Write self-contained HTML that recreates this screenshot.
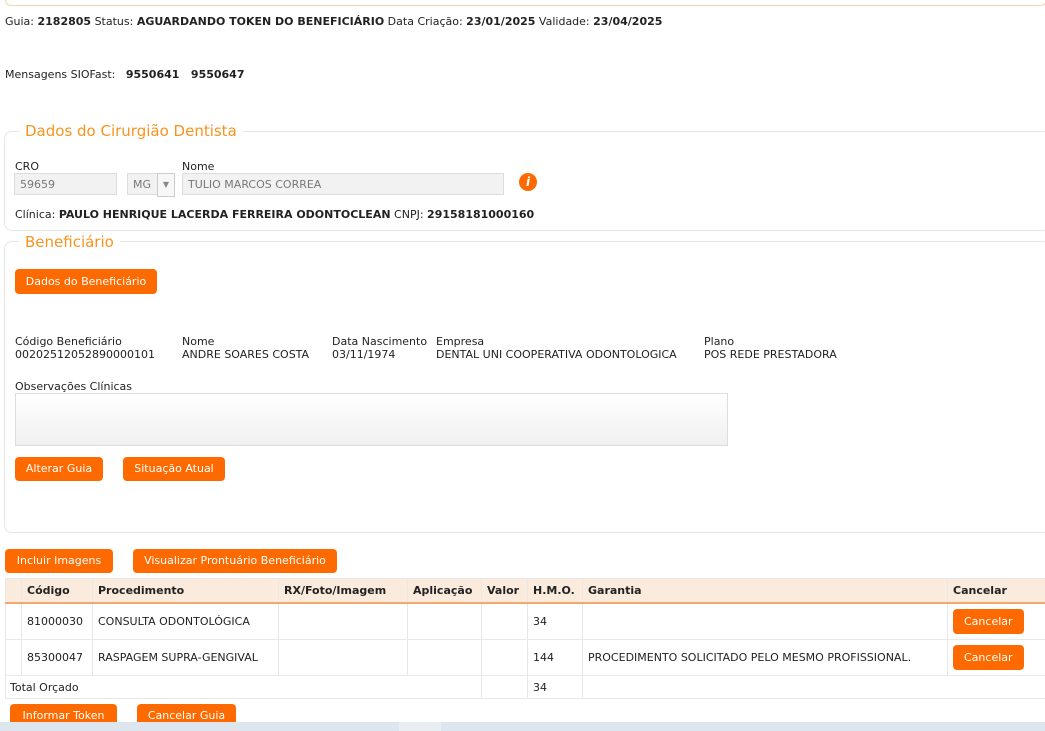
<!DOCTYPE html>
<html><head><meta charset="utf-8"><style>
body{margin:0;width:1045px;height:731px;overflow:hidden;background:#fff;font-family:"DejaVu Sans",Tahoma,sans-serif;font-size:11px;color:#222;position:relative}
.a{position:absolute;white-space:nowrap}
b{font-weight:bold}
.fs{position:absolute;border:1px solid #e6e6e6;border-radius:8px;border-right:none}
.lg{position:absolute;background:#fff;color:#f7941d;font-size:15px;padding:0 6px;font-family:"DejaVu Sans",sans-serif}
.in{position:absolute;background:#f2f2f2;border:1px solid #ddd;color:#777;height:22px;line-height:22px;padding-left:5px;box-sizing:border-box}
.btn{position:absolute;background:#ff6a00;color:#fff;border-radius:4px;height:24px;line-height:24px;text-align:center;font-size:11px}
table{position:absolute;left:5px;top:578px;border-collapse:collapse;width:1045px}
td,th{border:1px solid #e8e8e8;padding:0 5px;text-align:left;font-size:11px;white-space:nowrap}
tr.r td{height:35px}
th{background:#fbebdc;height:23px;border-bottom:2px solid #f5a66b}
.cb{display:inline-block;background:#ff6a00;color:#fff;border-radius:4px;padding:0 11px;height:25px;line-height:25px}
</style></head><body>
<div class="a" style="left:5px;top:-6px;width:1040px;height:10px;border:1px solid #f3d6b4;border-radius:6px"></div>
<div class="a" style="left:5px;top:15px">Guia: <b>2182805</b> Status: <b>AGUARDANDO TOKEN DO BENEFICIÁRIO</b> Data Criação: <b>23/01/2025</b> Validade: <b>23/04/2025</b></div>
<div class="a" style="left:5px;top:68px">Mensagens SIOFast: &nbsp; <b>9550641 &nbsp; 9550647</b></div>

<div class="fs" style="left:4px;top:131px;width:1045px;height:98px"></div>
<div class="lg" style="left:19px;top:122px">Dados do Cirurgião Dentista</div>
<div class="a" style="left:15px;top:160px">CRO</div>
<div class="a" style="left:182px;top:160px">Nome</div>
<div class="in" style="left:14px;top:173px;width:103px">59659</div>
<div class="in" style="left:127px;top:173px;width:31px">MG</div>
<div class="a" style="left:157px;top:173px;width:18px;height:24px;border:1px solid #ccc;box-sizing:border-box;background:#f7f7f7;color:#888;text-align:center;line-height:22px;font-size:8px">▼</div>
<div class="in" style="left:182px;top:173px;width:322px">TULIO MARCOS CORREA</div>
<div class="a" style="left:519px;top:173px;width:18px;height:18px;border-radius:50%;background:#ff6a00;color:#fff;font-weight:bold;font-style:italic;text-align:center;line-height:18px;font-size:12px">i</div>
<div class="a" style="left:15px;top:208px">Clínica: <b>PAULO HENRIQUE LACERDA FERREIRA ODONTOCLEAN</b> CNPJ: <b>29158181000160</b></div>

<div class="fs" style="left:4px;top:241px;width:1045px;height:290px"></div>
<div class="lg" style="left:19px;top:233px">Beneficiário</div>
<div class="btn" style="left:15px;top:269px;width:142px;height:25px;line-height:25px">Dados do Beneficiário</div>
<div class="a" style="left:15px;top:335px;line-height:13px">Código Beneficiário<br>00202512052890000101</div>
<div class="a" style="left:182px;top:335px;line-height:13px">Nome<br>ANDRE SOARES COSTA</div>
<div class="a" style="left:332px;top:335px;line-height:13px">Data Nascimento<br>03/11/1974</div>
<div class="a" style="left:436px;top:335px;line-height:13px">Empresa<br>DENTAL UNI COOPERATIVA ODONTOLOGICA</div>
<div class="a" style="left:704px;top:335px;line-height:13px">Plano<br>POS REDE PRESTADORA</div>
<div class="a" style="left:15px;top:380px">Observações Clínicas</div>
<div class="a" style="left:15px;top:393px;width:711px;height:51px;border:1px solid #ddd;background:linear-gradient(#fff,#f0f0f0)"></div>
<div class="btn" style="left:15px;top:457px;width:88px">Alterar Guia</div>
<div class="btn" style="left:123px;top:457px;width:102px">Situação Atual</div>

<div class="btn" style="left:5px;top:549px;width:108px">Incluir Imagens</div>
<div class="btn" style="left:133px;top:549px;width:204px">Visualizar Prontuário Beneficiário</div>

<table>
<tr><th style="width:5px"></th><th style="width:60px">Código</th><th style="width:175px">Procedimento</th><th style="width:118px">RX/Foto/Imagem</th><th style="width:63px">Aplicação</th><th style="width:35px">Valor</th><th style="width:44px">H.M.O.</th><th style="width:354px">Garantia</th><th>Cancelar</th></tr>
<tr class="r"><td></td><td>81000030</td><td>CONSULTA ODONTOLÓGICA</td><td></td><td></td><td></td><td>34</td><td></td><td><span class="cb">Cancelar</span></td></tr>
<tr class="r"><td></td><td>85300047</td><td>RASPAGEM SUPRA-GENGIVAL</td><td></td><td></td><td></td><td>144</td><td>PROCEDIMENTO SOLICITADO PELO MESMO PROFISSIONAL.</td><td><span class="cb">Cancelar</span></td></tr>
<tr><td colspan="5" style="height:22px;padding-left:4px">Total Orçado</td><td></td><td>34</td><td colspan="2" style="border-right:none"></td></tr>
</table>
<div class="btn" style="left:10px;top:704px;width:107px">Informar Token</div>
<div class="btn" style="left:137px;top:704px;width:99px">Cancelar Guia</div>
<div class="a" style="left:0;top:722px;width:1045px;height:9px;background:#dde6ee"></div>
<div class="a" style="left:399px;top:722px;width:42px;height:9px;background:#e9eef3"></div>
</body></html>
